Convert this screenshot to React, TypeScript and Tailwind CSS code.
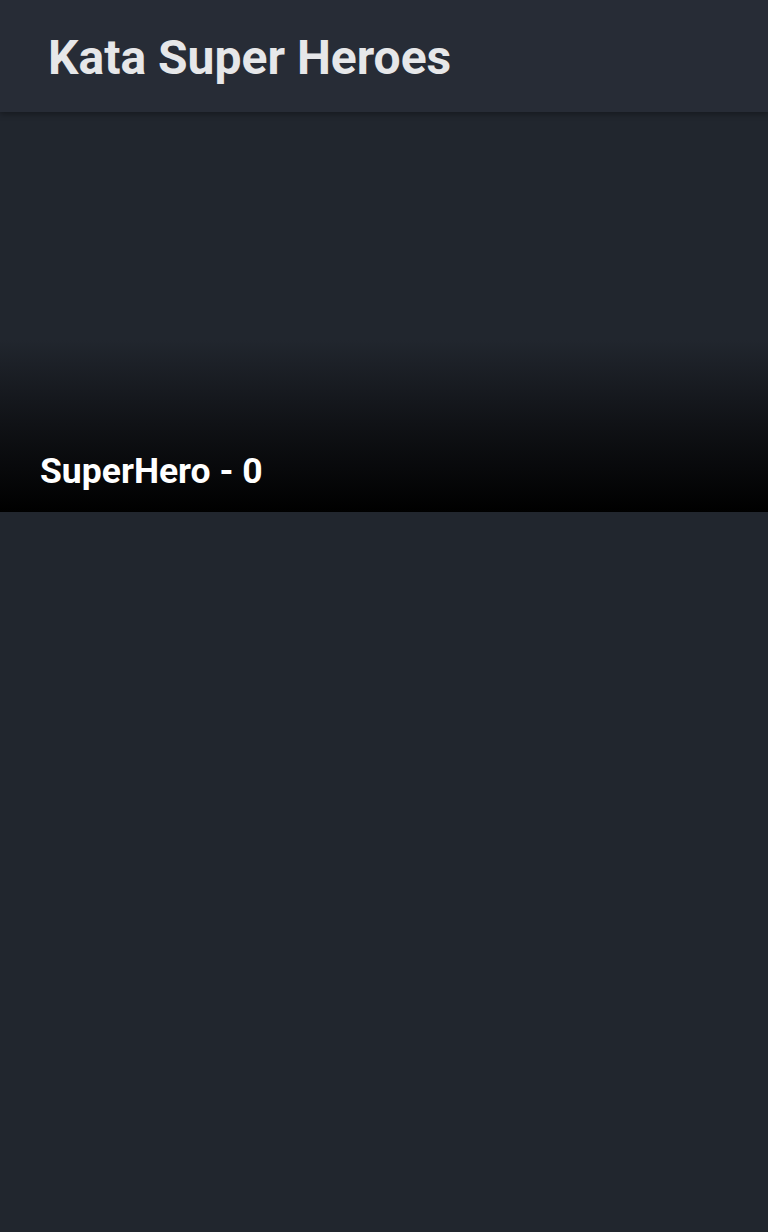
export default function App() {
  return (
    <div className="min-h-[1232px] bg-[#21262e] font-['Roboto',sans-serif]">
      <header className="relative z-10 flex h-[112px] items-center bg-[#272c36] px-12 pt-1 shadow-[0_2px_6px_rgba(0,0,0,0.35)]">
        <h1 className="text-[48px] font-bold leading-none text-[#e6e7e9]">Kata Super Heroes</h1>
      </header>
      <div className="flex h-[400px] flex-col justify-end bg-[linear-gradient(to_bottom,#21262e_0%,#21262e_57%,#101216_78%,#000000_100%)] px-10 pb-[23px]">
        <span className="text-[35.5px] font-bold leading-none text-white">SuperHero - 0</span>
      </div>
    </div>
  );
}
